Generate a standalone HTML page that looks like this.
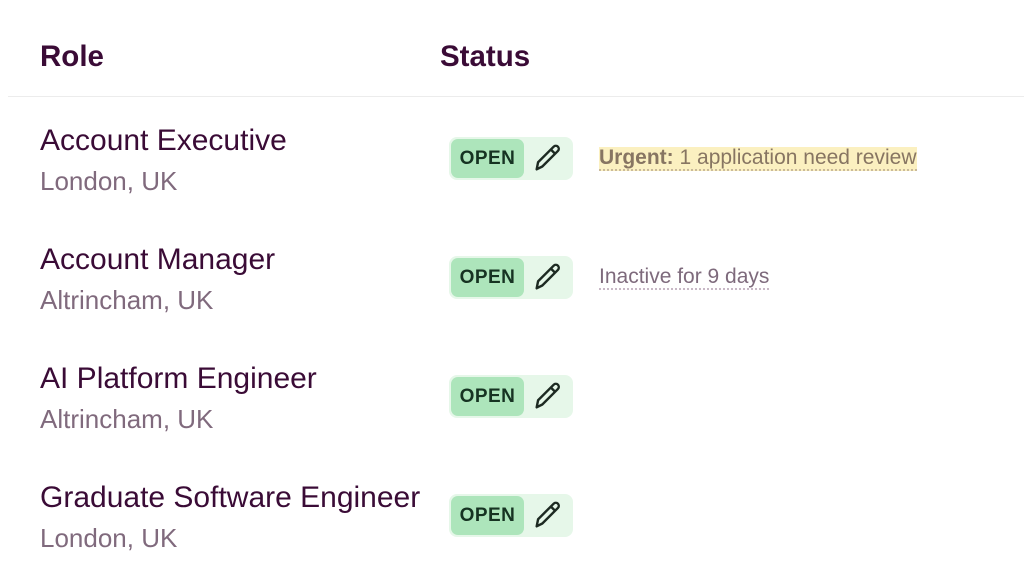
<!DOCTYPE html>
<html><head><style>
body{margin:0;background:#fff;font-family:"Liberation Sans",Roboto,sans-serif;width:1024px;height:575px;overflow:hidden;position:relative}
.h{position:absolute;top:40px;font-size:29.5px;line-height:34px;font-weight:bold;color:#3a0b36}
.line{position:absolute;left:8px;right:0;top:96px;height:1px;background:#ececec}
.t{position:absolute;left:40px;font-size:30px;line-height:34px;color:#3a0b36;white-space:nowrap}
.l{position:absolute;left:40px;font-size:26px;line-height:30px;color:#806a7d;white-space:nowrap}
.b{position:absolute;left:449px;width:124px;height:43px;background:#e6f7e9;border-radius:8px}
.b .o{position:absolute;left:2px;top:2px;width:73px;height:39px;background:#ade5bb;border-radius:7px;font-weight:bold;font-size:19px;color:#163322;line-height:39px;text-align:center;letter-spacing:.5px}
.b svg{position:absolute;left:82px;top:4px}
.n{position:absolute;left:599px;font-size:21px;color:#7e6a7c;border-bottom:2px dotted #c8b8c6;line-height:22px;white-space:nowrap}
</style></head><body>
<div class="h" style="left:40px">Role</div>
<div class="h" style="left:440px">Status</div>
<div class="line"></div>

<div class="t" style="top:124px">Account Executive</div>
<div class="l" style="top:166px">London, UK</div>
<div class="b" style="top:137px"><div class="o">OPEN</div><svg width="34" height="34" viewBox="0 0 24 24" fill="none" stroke="#1d2a22" stroke-width="1.7" stroke-linejoin="round"><path d="M4 20l1-5L16 4a2.1 2.1 0 0 1 3 3L8 18z M14 6l3 3"/></svg></div>
<div class="n" style="top:147px;background:#fbf0c0;color:#877562;border-color:#c9b99a"><b>Urgent:</b> 1 application need review</div>

<div class="t" style="top:243px">Account Manager</div>
<div class="l" style="top:285px">Altrincham, UK</div>
<div class="b" style="top:256px"><div class="o">OPEN</div><svg width="34" height="34" viewBox="0 0 24 24" fill="none" stroke="#1d2a22" stroke-width="1.7" stroke-linejoin="round"><path d="M4 20l1-5L16 4a2.1 2.1 0 0 1 3 3L8 18z M14 6l3 3"/></svg></div>
<div class="n" style="top:266px">Inactive for 9 days</div>

<div class="t" style="top:362px">AI Platform Engineer</div>
<div class="l" style="top:404px">Altrincham, UK</div>
<div class="b" style="top:375px"><div class="o">OPEN</div><svg width="34" height="34" viewBox="0 0 24 24" fill="none" stroke="#1d2a22" stroke-width="1.7" stroke-linejoin="round"><path d="M4 20l1-5L16 4a2.1 2.1 0 0 1 3 3L8 18z M14 6l3 3"/></svg></div>

<div class="t" style="top:481px">Graduate Software Engineer</div>
<div class="l" style="top:523px">London, UK</div>
<div class="b" style="top:494px"><div class="o">OPEN</div><svg width="34" height="34" viewBox="0 0 24 24" fill="none" stroke="#1d2a22" stroke-width="1.7" stroke-linejoin="round"><path d="M4 20l1-5L16 4a2.1 2.1 0 0 1 3 3L8 18z M14 6l3 3"/></svg></div>
</body></html>
